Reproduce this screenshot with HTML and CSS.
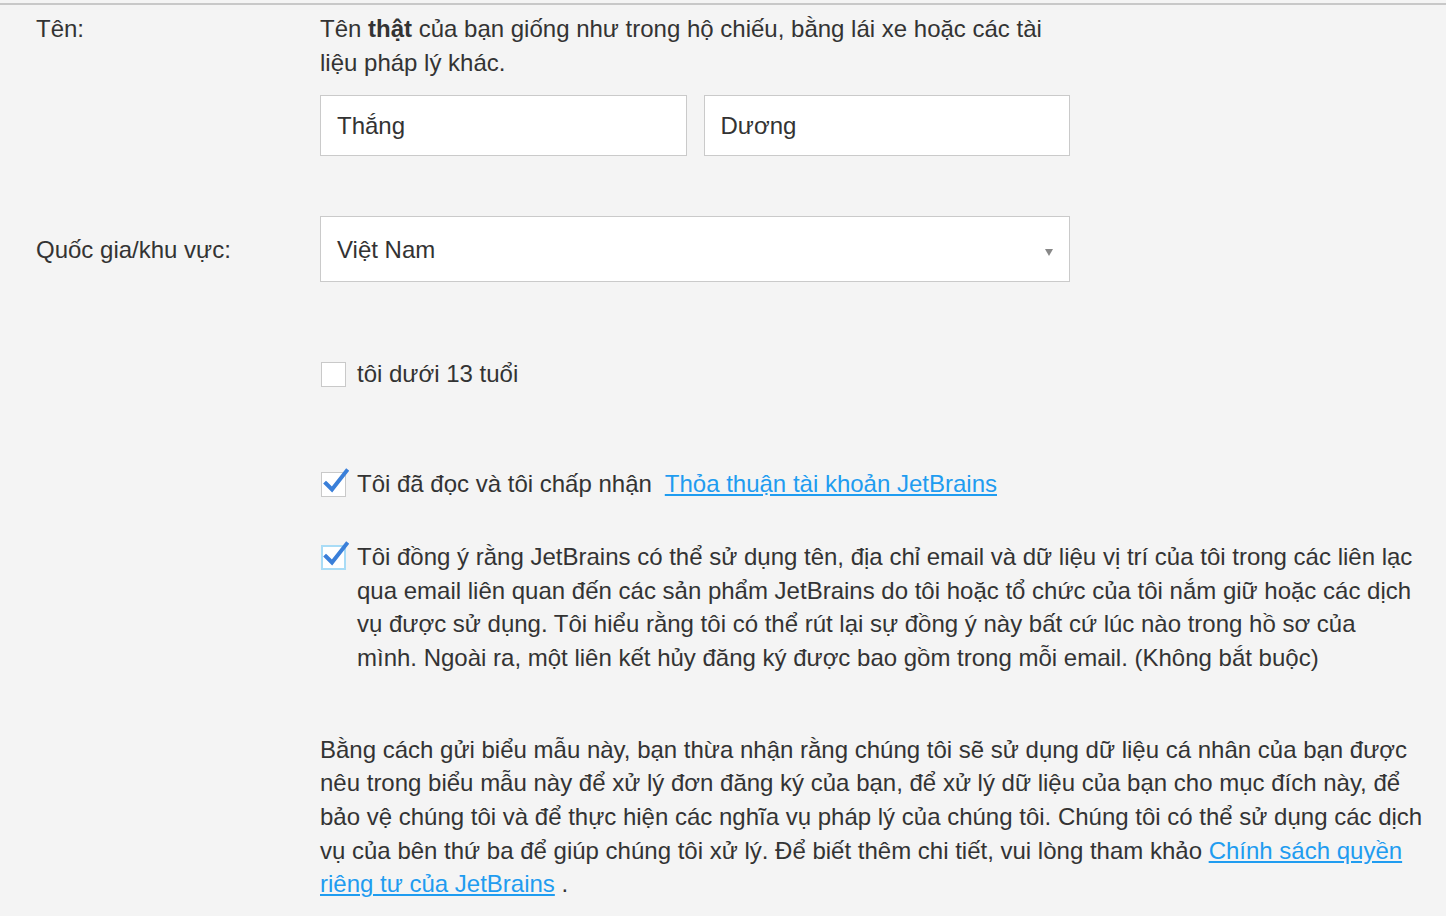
FILE: index.html
```html
<!DOCTYPE html>
<html lang="vi">
<head>
<meta charset="utf-8">
<link rel="stylesheet" href="styles.css">
</head>
<body>
<div class="topline"></div>
<form class="form">
  <div class="row">
    <div class="label">Tên:</div>
    <div class="field">
      <p class="hint">Tên <b>thật</b> của bạn giống như trong hộ chiếu, bằng lái xe hoặc các tài liệu pháp lý khác.</p>
      <div class="names">
        <div class="input">Thắng</div>
        <div class="input">Dương</div>
      </div>
    </div>
  </div>
  <div class="row row-country">
    <div class="label label-mid">Quốc gia/khu vực:</div>
    <div class="field">
      <div class="select">Việt Nam<span class="arrow"></span></div>
    </div>
  </div>
  <div class="row row-under13">
    <div class="label"></div>
    <div class="field">
      <label class="check">
        <span class="box"><svg width="28" height="30" viewBox="0 0 28 30"><rect x="0.5" y="4.5" width="24" height="24" fill="#fff" stroke="#c9c9c9"/></svg></span>
        <span class="ctext">tôi dưới 13 tuổi</span>
      </label>
    </div>
  </div>
  <div class="row row-accept">
    <div class="label"></div>
    <div class="field">
      <label class="check">
        <span class="box"><svg width="28" height="30" viewBox="0 0 28 30"><rect x="0.5" y="4.5" width="24" height="24" fill="#fff" stroke="#c9c9c9"/><path d="M5 15.5 L11 21.5 L25.5 3" fill="none" stroke="#3a7fd9" stroke-width="4" stroke-linecap="square"/></svg></span>
        <span class="ctext">Tôi đã đọc và tôi chấp nhận&nbsp; <a href="#">Thỏa thuận tài khoản JetBrains</a></span>
      </label>
    </div>
  </div>
  <div class="row row-consent">
    <div class="label"></div>
    <div class="field">
      <label class="check">
        <span class="box"><svg width="28" height="30" viewBox="0 0 28 30"><rect x="1" y="5" width="23" height="23" fill="#fff" stroke="#a9dcf6" stroke-width="2"/><path d="M5 15.5 L11 21.5 L25.5 3" fill="none" stroke="#3a7fd9" stroke-width="4" stroke-linecap="square"/></svg></span>
        <span class="ctext">Tôi đồng ý rằng JetBrains có thể sử dụng tên, địa chỉ email và dữ liệu vị trí của tôi trong các liên lạc qua email liên quan đến các sản phẩm JetBrains do tôi hoặc tổ chức của tôi nắm giữ hoặc các dịch vụ được sử dụng. Tôi hiểu rằng tôi có thể rút lại sự đồng ý này bất cứ lúc nào trong hồ sơ của mình. Ngoài ra, một liên kết hủy đăng ký được bao gồm trong mỗi email. (Không bắt buộc)</span>
      </label>
    </div>
  </div>
  <div class="row row-notice">
    <div class="label"></div>
    <div class="field">
      <p class="notice">Bằng cách gửi biểu mẫu này, bạn thừa nhận rằng chúng tôi sẽ sử dụng dữ liệu cá nhân của bạn được nêu trong biểu mẫu này để xử lý đơn đăng ký của bạn, để xử lý dữ liệu của bạn cho mục đích này, để bảo vệ chúng tôi và để thực hiện các nghĩa vụ pháp lý của chúng tôi. Chúng tôi có thể sử dụng các dịch vụ của bên thứ ba để giúp chúng tôi xử lý. Để biết thêm chi tiết, vui lòng tham khảo <a href="#">Chính sách quyền riêng tư của JetBrains</a> .</p>
    </div>
  </div>
</form>
</body>
</html>
```
FILE: styles.css
```css
html, body {
  margin: 0;
  padding: 0;
  background: #f4f4f4;
}
body {
  font-family: "Liberation Sans", Arial, sans-serif;
  font-size: 24px;
  line-height: 33.7px;
  color: #333;
  padding-top: 3px;
  height: 913px;
  overflow: hidden;
}
.topline {
  height: 2px;
  background: #c8c8c8;
}
.form {
  padding: 7px 6px 0 36px;
}
.row {
  display: grid;
  grid-template-columns: 284px 1fr;
}
.label {
  color: #333;
}
.hint {
  margin: 0;
  max-width: 750px;
}
.hint b {
  font-weight: bold;
}
.names {
  display: flex;
  gap: 17px;
  margin-top: 16px;
  width: 750px;
}
.input {
  flex: 1;
  height: 59px;
  border: 1px solid #cacaca;
  background: #fff;
  padding-left: 16px;
  display: flex;
  align-items: center;
}
.row-country {
  margin-top: 60px;
  align-items: center;
}
.select {
  width: 732px;
  height: 64px;
  border: 1px solid #cacaca;
  background: #fff;
  padding-left: 16px;
  display: flex;
  align-items: center;
  position: relative;
}
.arrow {
  position: absolute;
  right: 16px;
  top: 32px;
  width: 0;
  height: 0;
  border-left: 4px solid transparent;
  border-right: 4px solid transparent;
  border-top: 7px solid #888;
}
.row-under13 {
  margin-top: 75px;
}
.row-accept {
  margin-top: 76px;
}
.row-consent {
  margin-top: 39px;
}
.row-notice {
  margin-top: 58px;
}
.check {
  display: flex;
  align-items: flex-start;
  gap: 8px;
}
.box {
  flex: none;
  width: 28px;
  height: 30px;
  margin-top: 1px;
  margin-left: 1px;
}
.box svg {
  display: block;
}
.ctext {
  flex: 1;
  padding-right: 24px;
}
a {
  color: #1f9cf0;
  text-decoration: underline;
}
.notice {
  margin: 0;
}
```
